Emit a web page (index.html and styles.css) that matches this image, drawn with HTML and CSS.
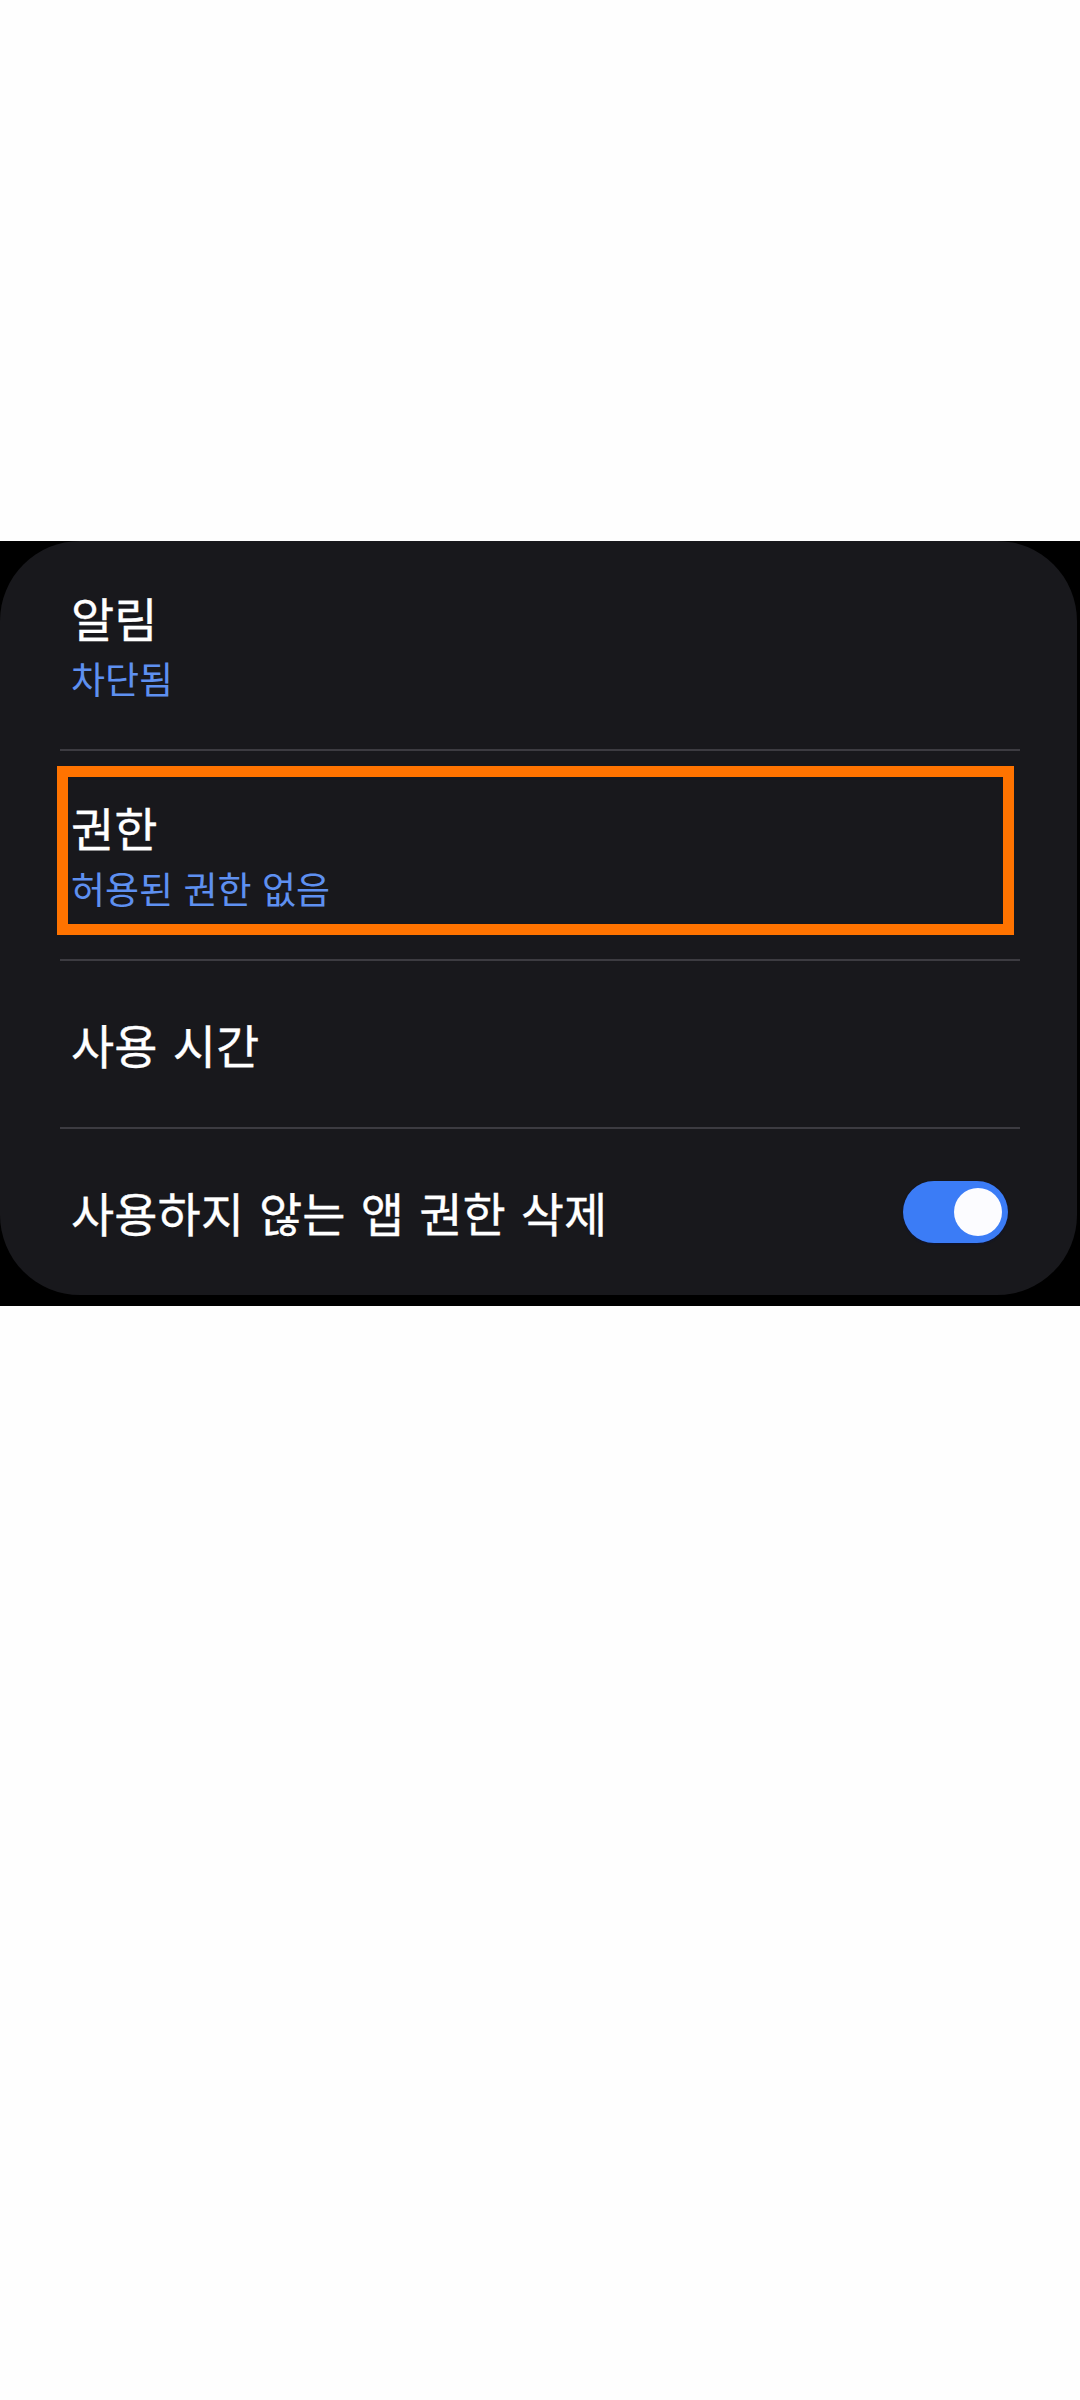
FILE: index.html
```html
<!DOCTYPE html>
<html lang="ko">
<head>
<meta charset="utf-8">
<title>앱 정보</title>
<link rel="stylesheet" href="styles.css">
</head>
<body>
<div class="sheet">
  <div class="card">
    <div class="row two">
      <div class="texts">
        <div class="title">알림</div>
        <div class="sub">차단됨</div>
      </div>
    </div>
    <div class="divider"></div>
    <div class="row two">
      <div class="texts">
        <div class="title">권한</div>
        <div class="sub">허용된 권한 없음</div>
      </div>
      <div class="highlight"></div>
    </div>
    <div class="divider"></div>
    <div class="row one">
      <div class="title">사용 시간</div>
    </div>
    <div class="divider"></div>
    <div class="row one">
      <div class="title">사용하지 않는 앱 권한 삭제</div>
      <div class="toggle"><div class="knob"></div></div>
    </div>
  </div>
</div>
</body>
</html>
```

FILE: styles.css
```css
html, body {
  margin: 0;
  padding: 0;
  background: #fefefe;
}
body {
  width: 1080px;
  height: 2400px;
  font-family: "Noto Sans CJK KR", "Noto Sans", sans-serif;
}
.sheet {
  margin-top: 541px;
  background: #000;
  padding: 0 3px 11px 0;
}
.card {
  background: #18181c;
  border-radius: 80px;
  position: relative;
}
.row {
  position: relative;
  display: flex;
  align-items: center;
  justify-content: space-between;
  padding: 0 69px 0 71px;
}
.row.two { height: 208px; }
.row.one { height: 166px; }
.texts {
  display: flex;
  flex-direction: column;
  gap: 10px;
}
.title {
  color: #ffffff;
  font-size: 47px;
  line-height: 56px;
  word-spacing: 2px;
  font-weight: 400;
  -webkit-text-stroke: 0.3px #ffffff;
}
.sub {
  color: #5e90f0;
  font-size: 37px;
  line-height: 46px;
  font-weight: 400;
}
.divider {
  height: 2px;
  margin: 0 57px 0 60px;
  background: #3c3b41;
}
.highlight {
  position: absolute;
  left: 57px;
  top: 15px;
  width: 957px;
  height: 169px;
  box-sizing: border-box;
  border: 11px solid #ff7300;
}
.toggle {
  width: 105px;
  height: 62px;
  border-radius: 31px;
  background: #3b7cf6;
  box-shadow: 0 1px 2px rgba(10, 20, 60, 0.8);
  display: flex;
  align-items: center;
  justify-content: flex-end;
  padding-right: 6px;
  box-sizing: border-box;
}
.knob {
  width: 48px;
  height: 48px;
  border-radius: 50%;
  background: #fcfcff;
}
```
